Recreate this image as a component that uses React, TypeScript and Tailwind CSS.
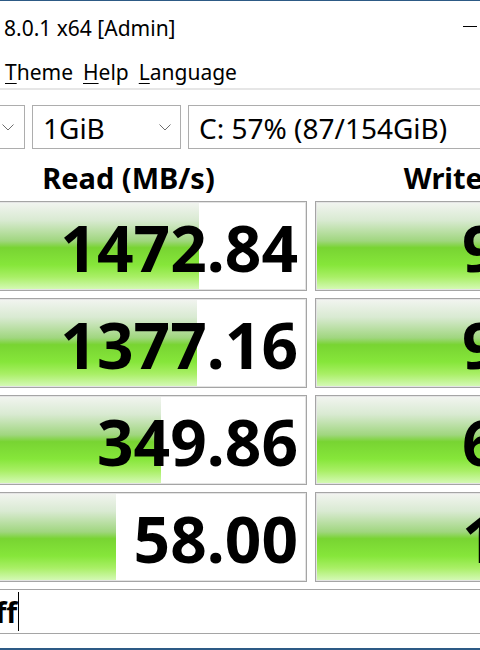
import React from 'react';

const reads = [
  { value: '1472.84', fill: 69.6 },
  { value: '1377.16', fill: 69.0 },
  { value: '349.86', fill: 58.9 },
  { value: '58.00', fill: 46.2 },
];

const writes = [
  { value: '965.31', fill: 68 },
  { value: '958.07', fill: 68 },
  { value: '654.72', fill: 62 },
  { value: '156.38', fill: 50 },
];

function Chevron() {
  return (
    <svg width="12" height="7" viewBox="0 0 12 7" className="shrink-0">
      <polyline points="0.5,0.5 6,6 11.5,0.5" fill="none" stroke="#6e6e6e" strokeWidth="1" />
    </svg>
  );
}

function Meter({ value, fill }: { value: string; fill: number }) {
  return (
    <div className="relative h-[90px] border border-[#a5a5a5] bg-white shadow-[inset_0_0_0_1px_#e4e4e4] overflow-hidden">
      {/* barra verde */}
      <div
        className="absolute top-[1px] bottom-[1px] left-[1px] bg-[linear-gradient(to_bottom,#f1f4ef_0%,#d9ead2_20%,#a0d67f_44%,#78d432_52%,#86e63a_72%,#a9ef66_86%,#d4f9b4_100%)]"
        style={{ width: `${fill}%` }}
      />
      <div className="relative pt-[14px] pr-[8px] text-right text-[64px] font-bold leading-[64px] text-black whitespace-nowrap">
        {value}
      </div>
    </div>
  );
}

export default function App() {
  return (
    <div className="w-[480px] h-[650px] overflow-hidden bg-white flex flex-col font-['Noto_Sans',sans-serif] text-black select-none">
      {/* borde superior */}
      <div className="h-px bg-[#2d5a85] shrink-0" />

      {/* barra de título */}
      <div className="h-[49px] shrink-0 flex justify-between">
        <div className="pt-[13px] pl-[4px] text-[21px] leading-[28px] whitespace-nowrap">8.0.1 x64 [Admin]</div>
        <div className="mt-[25px] mr-[3px] w-[14px] h-px bg-black" />
      </div>

      {/* menú */}
      <div className="h-[38px] shrink-0 flex gap-[10px] pt-[8px] pl-[5px] text-[21px] leading-[28px] whitespace-nowrap">
        <span><span className="underline underline-offset-[3px] decoration-1">T</span>heme</span>
        <span><span className="underline underline-offset-[3px] decoration-1">H</span>elp</span>
        <span><span className="underline underline-offset-[3px] decoration-1">L</span>anguage</span>
      </div>
      <div className="h-[2px] shrink-0 bg-[#e6e6e6]" />

      {/* contenido */}
      <div className="flex flex-col ml-[-50px] w-[730px] pt-[15px] shrink-0">
        {/* combos */}
        <div className="flex gap-[7px] h-[44px]">
          <div className="w-[75px] border border-[#adadad] flex items-center justify-end pr-[10px]">
            <Chevron />
          </div>
          <div className="w-[149px] border border-[#adadad] flex items-center justify-between pl-[10px] pr-[9px]">
            <span className="text-[28px] leading-[38px] pt-[2px]">1GiB</span>
            <Chevron />
          </div>
          <div className="w-[400px] border border-[#adadad] flex items-center pl-[10px]">
            <span className="text-[28px] leading-[38px] pt-[2px] whitespace-nowrap">C: 57% (87/154GiB)</span>
          </div>
        </div>

        {/* cabeceras */}
        <div className="grid grid-cols-[357px_357px] gap-x-[8px] h-[52px]">
          <div className="pt-[10px] text-center text-[29px] font-bold leading-[38px] whitespace-nowrap">Read (MB/s)</div>
          <div className="pt-[10px] text-center text-[29px] font-bold leading-[38px] whitespace-nowrap">Write (MB/s)</div>
        </div>

        {/* medidores */}
        <div className="grid grid-cols-[357px_357px] gap-x-[8px] gap-y-[7px]">
          {reads.map((r, i) => (
            <React.Fragment key={i}>
              <Meter value={r.value} fill={r.fill} />
              <Meter value={writes[i].value} fill={writes[i].fill} />
            </React.Fragment>
          ))}
        </div>

        {/* comentario */}
        <div className="mt-[7px] ml-[-150px] w-[880px] h-[45px] border border-[#a5a5a5] flex items-center">
          <div className="w-[216px] shrink-0 text-right text-[28px] font-bold leading-[38px] whitespace-nowrap">Off</div>
          <div className="ml-[1px] w-px h-[39px] bg-black" />
        </div>
      </div>

      <div className="flex-1" />
      {/* borde inferior */}
      <div className="h-[2px] bg-[#2d5a85] shrink-0" />
    </div>
  );
}
